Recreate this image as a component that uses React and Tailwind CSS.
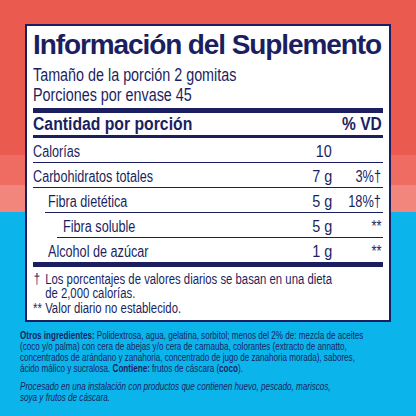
import React from "react";

const font = "font-['Liberation_Sans',Arial,sans-serif]";

function Row({ label, amount, pct, rowClass, textClass, last }) {
    return (
        <div className={"flex items-start pt-[4px] leading-[20px] text-[16px] " + (last ? "h-[24px] " : "h-[25px] border-b border-[#1b1f5f] ") + rowClass}>
            <span className={"flex-1 " + textClass}>
                <span className="inline-block whitespace-nowrap origin-left scale-x-[0.79]">{label}</span>
            </span>
            <span className="inline-block whitespace-nowrap text-right origin-right scale-x-[0.9] mr-[1px]">{amount}</span>
            <span className="w-[50px] text-right pr-[2px]">
                <span className="inline-block whitespace-nowrap origin-right scale-x-[0.8]">{pct}</span>
            </span>
        </div>
    );
}

export default function App() {
    const rows = [
        { label: "Calorías", amount: "10", pct: "", rowClass: "", textClass: "" },
        { label: "Carbohidratos totales", amount: "7 g", pct: "3%†", rowClass: "", textClass: "" },
        { label: "Fibra dietética", amount: "5 g", pct: "18%†", rowClass: "ml-[12px]", textClass: "pl-[3px]" },
        { label: "Fibra soluble", amount: "5 g", pct: "**", rowClass: "ml-[24px]", textClass: "pl-[6px]" },
        { label: "Alcohol de azúcar", amount: "1 g", pct: "**", rowClass: "", textClass: "pl-[15px]", last: true },
    ];

    return (
        <div className={font + " w-[416px] h-[416px] overflow-hidden pt-[24px] text-[#1b1f5f] bg-[linear-gradient(to_bottom,#eb5a4f_0px,#eb5a4f_155px,#ef6c62_155px,#ef6c62_185px,#f3867c_185px,#f3867c_212px,#0bb4ea_212px)]"}>
            <div className="mx-[25px] border-[2px] border-[#1b1f5f] bg-white px-[6px] pt-[5px] pb-[5px]">
                <h1 className="font-bold text-[28px] leading-[28px] tracking-[-1.1px] mb-[6px] whitespace-nowrap">
                    Información del Suplemento
                </h1>
                <div className="text-[17.5px] leading-[20px]">
                    <div className="whitespace-nowrap origin-left scale-x-[0.82]">Tamaño de la porción 2 gomitas</div>
                    <div className="whitespace-nowrap origin-left scale-x-[0.82]">Porciones por envase 45</div>
                </div>
                <div className="h-[5px] bg-[#1b1f5f] mt-[3px]"></div>
                <div className="flex justify-between font-bold text-[17.5px] leading-[22px] h-[22px]">
                    <span className="inline-block whitespace-nowrap origin-left scale-x-[0.9]">Cantidad por porción</span>
                    <span className="inline-block whitespace-nowrap origin-right scale-x-[0.89] pr-[1px]">% VD</span>
                </div>
                <div className="h-[3px] bg-[#1b1f5f]"></div>
                <div>
                    {rows.map((r) => (
                        <Row key={r.label} {...r} />
                    ))}
                </div>
                <div className="h-[5px] bg-[#1b1f5f]"></div>
                <div className="text-[14px] leading-[14px] pt-[4.5px] whitespace-nowrap origin-left scale-x-[0.81]">
                    <div className="flex">
                        <span className="w-[15px] shrink-0 pl-[1px]">†</span>
                        <span>Los porcentajes de valores diarios se basan en una dieta<br />de 2,000 calorías.</span>
                    </div>
                    <div className="flex mt-[1px]">
                        <span className="w-[15px] shrink-0">**</span>
                        <span>Valor diario no establecido.</span>
                    </div>
                </div>
            </div>
            <div className="px-[26px] pt-[8px] text-[10.5px] leading-[11px] whitespace-nowrap origin-left scale-x-[0.77]">
                <p>
                    <b>Otros ingredientes:</b> Polidextrosa, agua, gelatina, sorbitol; menos del 2% de: mezcla de aceites<br />
                    (coco y/o palma) con cera de abejas y/o cera de carnauba, colorantes (extracto de annatto,<br />
                    concentrados de arándano y zanahoria, concentrado de jugo de zanahoria morada), sabores,<br />
                    ácido málico y sucralosa. <b>Contiene:</b> frutos de cáscara (<b>coco</b>).
                </p>
                <p className="italic mt-[7px]">
                    Procesado en una instalación con productos que contienen huevo, pescado, mariscos,<br />
                    soya y frutos de cáscara.
                </p>
            </div>
        </div>
    );
}
